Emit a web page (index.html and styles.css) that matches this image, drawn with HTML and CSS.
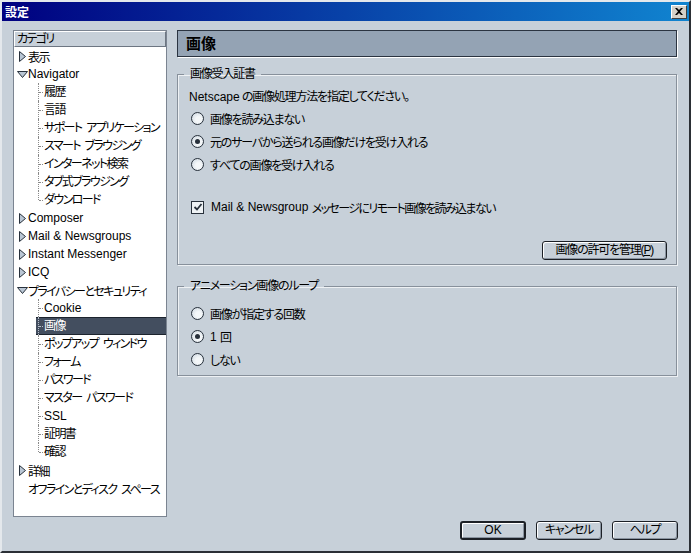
FILE: index.html
```html
<!DOCTYPE html>
<html lang="ja">
<head>
    <meta charset="UTF-8">
    <title>設定</title>
    <link rel="stylesheet" href="styles.css">
</head>
<body>
    <div class="window">
        <div class="titlebar">
            <span class="title">設定</span>
            <span class="close">
                <svg width="8" height="7" viewBox="0 0 8 7"><path d="M0 0h2l2 2 2-2h2L5 3.5 8 7H6L4 5 2 7H0l3-3.5z" fill="#000"/></svg>
            </span>
        </div>

        <div class="content">
            <div class="tree">
                <div class="tree-head">カテゴリ</div>

                <div class="row"><span class="tw"><svg width="7" height="11" viewBox="0 0 7 11"><path d="M0.5 0.5L6.5 5.5L0.5 10.5Z" fill="#b9c6d4" stroke="#27303b"/></svg></span>表示</div>
                <div class="row en"><span class="tw"><svg width="11" height="7" viewBox="0 0 11 7"><path d="M0.5 0.5H10.5L5.5 6.5Z" fill="#b9c6d4" stroke="#27303b"/></svg></span>Navigator</div>
                <div class="kids">
                    <div class="leaf"><span class="label">履歴</span></div>
                    <div class="leaf"><span class="label">言語</span></div>
                    <div class="leaf"><span class="label">サポート アプリケーション</span></div>
                    <div class="leaf"><span class="label">スマート ブラウジング</span></div>
                    <div class="leaf"><span class="label">インターネット検索</span></div>
                    <div class="leaf"><span class="label">タブ式ブラウジング</span></div>
                    <div class="leaf"><span class="label">ダウンロード</span></div>
                </div>
                <div class="row en"><span class="tw"><svg width="7" height="11" viewBox="0 0 7 11"><path d="M0.5 0.5L6.5 5.5L0.5 10.5Z" fill="#b9c6d4" stroke="#27303b"/></svg></span>Composer</div>
                <div class="row en"><span class="tw"><svg width="7" height="11" viewBox="0 0 7 11"><path d="M0.5 0.5L6.5 5.5L0.5 10.5Z" fill="#b9c6d4" stroke="#27303b"/></svg></span>Mail &amp; Newsgroups</div>
                <div class="row en"><span class="tw"><svg width="7" height="11" viewBox="0 0 7 11"><path d="M0.5 0.5L6.5 5.5L0.5 10.5Z" fill="#b9c6d4" stroke="#27303b"/></svg></span>Instant Messenger</div>
                <div class="row en"><span class="tw"><svg width="7" height="11" viewBox="0 0 7 11"><path d="M0.5 0.5L6.5 5.5L0.5 10.5Z" fill="#b9c6d4" stroke="#27303b"/></svg></span>ICQ</div>
                <div class="row"><span class="tw"><svg width="11" height="7" viewBox="0 0 11 7"><path d="M0.5 0.5H10.5L5.5 6.5Z" fill="#b9c6d4" stroke="#27303b"/></svg></span>プライバシーとセキュリティ</div>
                <div class="kids">
                    <div class="leaf en"><span class="label">Cookie</span></div>
                    <div class="leaf selected"><span class="label">画像</span></div>
                    <div class="leaf"><span class="label">ポップアップ ウィンドウ</span></div>
                    <div class="leaf"><span class="label">フォーム</span></div>
                    <div class="leaf"><span class="label">パスワード</span></div>
                    <div class="leaf"><span class="label">マスター パスワード</span></div>
                    <div class="leaf en"><span class="label">SSL</span></div>
                    <div class="leaf"><span class="label">証明書</span></div>
                    <div class="leaf"><span class="label">確認</span></div>
                </div>
                <div class="row"><span class="tw"><svg width="7" height="11" viewBox="0 0 7 11"><path d="M0.5 0.5L6.5 5.5L0.5 10.5Z" fill="#b9c6d4" stroke="#27303b"/></svg></span>詳細</div>
                <div class="row"><span class="tw"></span>オフラインとディスク スペース</div>
            </div>

            <div class="main">
                <div class="page-head">画像</div>

                <fieldset class="group first">
                    <legend>画像受入証書</legend>
                    <div class="desc"><span class="en">Netscape</span> の画像処理方法を指定してください。</div>
                    <div class="opt"><span class="radio"></span>画像を読み込まない</div>
                    <div class="opt"><span class="radio on"></span>元のサーバから送られる画像だけを受け入れる</div>
                    <div class="opt"><span class="radio"></span>すべての画像を受け入れる</div>
                    <div class="opt check-row">
                        <span class="check">
                            <svg width="10" height="10" viewBox="0 0 10 10"><path d="M1.5 5L4 7.5L8.5 2" fill="none" stroke="#27303b" stroke-width="1.8"/></svg>
                        </span><span class="en">Mail &amp; Newsgroup&nbsp;</span><span class="tight">メッセージにリモート画像を読み込まない</span>
                    </div>
                    <div class="group-actions">
                        <button class="btn">画像の許可を管理(<u>P</u>)</button>
                    </div>
                </fieldset>

                <fieldset class="group second">
                    <legend>アニメーション画像のループ</legend>
                    <div class="opt"><span class="radio"></span>画像が指定する回数</div>
                    <div class="opt"><span class="radio on"></span><span class="en">1&nbsp;</span>回</div>
                    <div class="opt"><span class="radio"></span>しない</div>
                </fieldset>
            </div>
        </div>

        <div class="footer">
            <button class="btn wide default"><span class="en">OK</span></button>
            <button class="btn wide">キャンセル</button>
            <button class="btn wide">ヘルプ</button>
        </div>
    </div>
</body>
</html>
```

FILE: styles.css
```css
body {
    margin: 0;
    font-family: "Liberation Sans", "Noto Sans CJK JP", sans-serif;
    font-size: 12px;
    letter-spacing: -1.2px;
    font-feature-settings: "palt";
    color: #000;
    background: #c7d0d9;
}
.en {
    letter-spacing: 0;
}
.tight {
    letter-spacing: -1.6px;
}
.window {
    box-sizing: border-box;
    width: 691px;
    height: 553px;
    border: 2px solid;
    border-color: #e4e8ec #2b2f35 #2b2f35 #e4e8ec;
    background: #c7d0d9;
}
.titlebar {
    height: 19px;
    display: flex;
    align-items: center;
    justify-content: space-between;
    padding: 0 2px 0 2px;
    background: linear-gradient(to right, #000080, #1084d0);
    color: #fff;
}
.title {
    font-size: 12px;
    font-weight: bold;
    letter-spacing: 0;
    padding-left: 1px;
}
.close {
    width: 16px;
    height: 14px;
    box-sizing: border-box;
    display: flex;
    align-items: center;
    justify-content: center;
    background: #d4d0c8;
    border: 1px solid;
    border-color: #fff #404040 #404040 #fff;
}
.content {
    display: flex;
    gap: 10px;
    padding: 9px 0 0 11px;
    box-sizing: border-box;
    height: 496px;
}

/* category tree */
.tree {
    width: 154px;
    height: 487px;
    box-sizing: border-box;
    border: 1px solid #7b8491;
    background: #fff;
    letter-spacing: -1.6px;
    word-spacing: 3px;
}
.tree .en {
    letter-spacing: 0;
    word-spacing: 0;
}
.tree-head {
    height: 16px;
    box-sizing: border-box;
    line-height: 15px;
    padding-left: 2px;
    background: #c7d0d9;
    border: 1px solid;
    border-color: #fff #6d7682 #6d7682 #fff;
}
.row {
    display: flex;
    align-items: center;
    height: 18px;
    padding-left: 3px;
    white-space: nowrap;
}
.tw {
    flex: none;
    width: 11px;
    display: flex;
    justify-content: center;
}
.row .tw svg[width="7"] {
    margin-left: -1px;
}
.kids {
    display: flex;
    flex-direction: column;
}
.leaf {
    position: relative;
    height: 18px;
    padding-left: 22px;
    white-space: nowrap;
}
.leaf .label {
    display: block;
    height: 18px;
    line-height: 18px;
    padding-left: 8px;
    box-sizing: border-box;
}
.leaf::before {
    content: "";
    position: absolute;
    left: 24px;
    top: 0;
    height: 18px;
    border-left: 1px dotted #8a8a8a;
}
.leaf:last-child::before {
    height: 9px;
}
.leaf::after {
    content: "";
    position: absolute;
    left: 25px;
    top: 9px;
    width: 4px;
    border-top: 1px dotted #8a8a8a;
}
.leaf.selected .label {
    background: #434e5f;
    color: #fff;
    border-top: 1px solid #1c232d;
    border-bottom: 1px solid #1c232d;
    line-height: 16px;
}
.leaf.selected::before,
.leaf.selected::after {
    border-color: #b8c0cc;
    z-index: 1;
}

/* right side */
.main {
    width: 500px;
    display: flex;
    flex-direction: column;
}
.page-head {
    height: 27px;
    box-sizing: border-box;
    line-height: 25px;
    padding-left: 8px;
    font-size: 15px;
    font-weight: bold;
    letter-spacing: 0;
    background: #94a3b4;
    border: 1px solid #2b3441;
    box-shadow: 1px 1px 0 #fff;
}
.group {
    margin: 10px 0 0 0;
    padding: 8px 9px 4px 11px;
    border: 1px solid #87909b;
    box-shadow: inset 1px 1px 0 #eef1f4, 1px 1px 0 #eef1f4;
    min-width: 0;
}
.group.second {
    margin-top: 14px;
    padding-top: 9px;
}
.group legend {
    padding: 0 6px;
    margin-left: -5px;
    line-height: 14px;
}
.desc {
    line-height: 16px;
    margin-bottom: 2px;
}
.opt {
    display: flex;
    align-items: center;
    height: 23px;
    margin-left: 2px;
}
.radio {
    width: 13px;
    height: 13px;
    box-sizing: border-box;
    border-radius: 50%;
    border: 1px solid #27303b;
    background: radial-gradient(circle at 60% 60%, #f4f7f9 30%, #c9d4de 100%);
    margin-right: 6px;
    display: flex;
    align-items: center;
    justify-content: center;
}
.radio.on::after {
    content: "";
    width: 5px;
    height: 5px;
    border-radius: 50%;
    background: #27303b;
}
.check-row {
    margin-top: 20px;
    height: 22px;
}
.check {
    width: 13px;
    height: 13px;
    box-sizing: border-box;
    border: 1px solid #27303b;
    background: #eef2f5;
    margin-right: 7px;
    display: flex;
    align-items: center;
    justify-content: center;
}
.group-actions {
    display: flex;
    justify-content: flex-end;
    margin-top: 23px;
}
.btn {
    font-family: inherit;
    font-size: 12px;
    letter-spacing: -1.2px;
    font-feature-settings: "palt";
    height: 19px;
    padding: 0 8px;
    color: #000;
    background: #c7d0d9;
    border: 1px solid #1c2026;
    border-radius: 3px;
    box-shadow: inset 1px 1px 0 #fff, inset -1px -1px 0 #8a94a0;
    line-height: 15px;
}
.group-actions .btn {
    padding: 0 13px;
}
.footer {
    display: flex;
    justify-content: flex-end;
    gap: 10px;
    padding: 4px 11px 0 0;
}
.btn.wide {
    width: 66px;
    padding: 0;
}
.btn.default {
    border-width: 2px;
}
```
